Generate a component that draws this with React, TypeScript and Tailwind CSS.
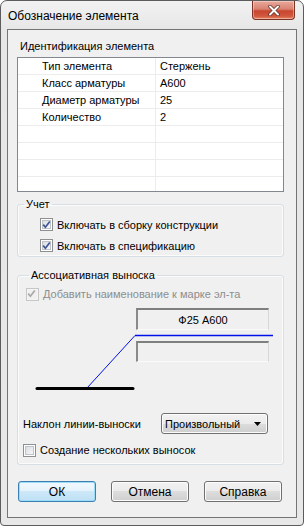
const rows: [string, string][] = [
  ['Тип элемента', 'Стержень'],
  ['Класс арматуры', 'A600'],
  ['Диаметр арматуры', '25'],
  ['Количество', '2'],
  ['', ''],
  ['', ''],
  ['', ''],
  ['', ''],
]

// Win7 style checkbox
function CheckBox({ checked, disabled }: { checked?: boolean; disabled?: boolean }) {
  return (
    <span
      className={`flex h-[13px] w-[13px] shrink-0 items-center justify-center border ${
        disabled ? 'border-[#c6c6c6] bg-[#f4f4f4]' : 'border-[#8e8f8f] bg-white'
      }`}
    >
      <span
        className={`relative h-[9px] w-[9px] ${
          disabled
            ? 'bg-[#f0f0f0]'
            : 'border border-[#bfc3c9] bg-[linear-gradient(135deg,#d9dde3,#f7f7f7)]'
        }`}
      >
        {checked && (
          <svg viewBox="0 0 11 11" className="absolute left-[-2px] top-[-2px] h-[11px] w-[11px]">
            <path
              d="M2.2 5.6 L4.4 8.2 L8.8 2.4"
              fill="none"
              stroke={disabled ? '#a9a9a9' : '#3f5595'}
              strokeWidth="1.7"
            />
          </svg>
        )}
      </span>
    </span>
  )
}

function Sunken({ children, h }: { children?: React.ReactNode; h: string }) {
  return (
    <div
      className={`flex w-[133px] items-center justify-center border-t-2 border-l-2 border-r border-b border-t-[#7f7f7f] border-l-[#8a8a8a] border-r-[#d6d6d6] border-b-[#fafafa] bg-[#f0f0f0] ${h}`}
    >
      {children}
    </div>
  )
}

function WinButton({ label, primary }: { label: string; primary?: boolean }) {
  return (
    <button
      className={`h-[21px] w-[78px] rounded-[3px] border text-[12px] leading-none text-black ${
        primary
          ? 'border-[#3c7fb1] bg-[linear-gradient(#f1f8fd_0%,#e4f2fb_50%,#cde8f8_50%,#bfe0f5_100%)] shadow-[inset_0_0_0_1px_#9ddcf8]'
          : 'border-[#707070] bg-[linear-gradient(#f2f2f2_0%,#ebebeb_50%,#dddddd_50%,#cfcfcf_100%)] shadow-[inset_0_0_0_1px_#fcfcfc]'
      }`}
    >
      {label}
    </button>
  )
}

export default function App() {
  return (
    <div className="h-[526px] w-[304px] bg-white font-['Liberation_Sans',Arial,sans-serif] text-[11px] leading-[14px] text-black">
      <div className="flex h-[526px] w-[304px] flex-col rounded-t-[7px] rounded-b-[4px] border border-[#5c5c5c] bg-[linear-gradient(#f2f2f2,#e6e6e6_30px,#e8e8e8)]">
        {/* ── Title bar ── */}
        <div className="flex h-[28px] shrink-0 items-start justify-between">
          <span className="pl-[7px] pt-[8px] text-[12px] leading-[14px]">Обозначение элемента</span>
          <button className="mr-[8px] flex h-[19px] w-[43px] items-center justify-center rounded-b-[4px] border border-t-0 border-[#7d3426] bg-[linear-gradient(#e9a99c_0%,#d98270_45%,#c8462f_55%,#d2593f_85%,#e68a6a_100%)] shadow-[inset_0_0_0_1px_rgba(255,255,255,0.35)]">
            <svg viewBox="0 0 12 11" className="h-[11px] w-[12px]">
              <path d="M2 1.5 L10 9.5 M10 1.5 L2 9.5" stroke="#5a2a20" strokeWidth="3.4" strokeLinecap="round" />
              <path d="M2 1.5 L10 9.5 M10 1.5 L2 9.5" stroke="#ffffff" strokeWidth="2" strokeLinecap="round" />
            </svg>
          </button>
        </div>

        {/* ── Client area ── */}
        <div className="mx-[6px] mb-[7px] flex flex-1 flex-col border border-[#747474] bg-[#f0f0f0] pl-[9px] pr-[12px]">
          <div className="pl-[3px] pt-[9px]">Идентификация элемента</div>

          {/* list */}
          <div className="mt-[4px] h-[135px] shrink-0 overflow-hidden border border-[#828790] bg-white">
            {rows.map(([k, v], i) => (
              <div key={i} className="grid h-[17px] grid-cols-[138px_1fr] border-b border-[#ececec]">
                <div className="flex items-center border-r border-[#ececec] pl-[24px]">{k}</div>
                <div className="flex items-center pl-[4px]">{v}</div>
              </div>
            ))}
          </div>

          {/* Учет */}
          <fieldset className="mt-[5px] rounded-[3px] border border-[#d5dfe5] px-0 pb-[2px] shadow-[inset_0_0_0_1px_#fbfbfb]">
            <legend className="ml-[6px] px-[2px] leading-[14px]">Учет</legend>
            <div className="flex flex-col gap-[4px] pl-[22px] pt-[5px]">
              <label className="flex h-[17px] items-center gap-[4px]">
                <CheckBox checked />
                <span>Включать в сборку конструкции</span>
              </label>
              <label className="flex h-[17px] items-center gap-[4px]">
                <CheckBox checked />
                <span>Включать в спецификацию</span>
              </label>
            </div>
          </fieldset>

          {/* Ассоциативная выноска */}
          <fieldset className="mt-[11px] rounded-[3px] border border-[#d5dfe5] pb-[6px] pl-[5px] shadow-[inset_0_0_0_1px_#fbfbfb]">
            <legend className="ml-[6px] px-[2px] leading-[14px]">Ассоциативная выноска</legend>
            <label className="ml-[3px] mt-[4px] flex h-[16px] items-center gap-[4px] text-[#8d8d8d]">
              <CheckBox checked disabled />
              <span>Добавить наименование к марке эл-та</span>
            </label>

            {/* leader preview */}
            <div className="relative mt-[2px] flex h-[92px] flex-col gap-[11px] pl-[113px] pt-[4px]">
              <svg viewBox="0 0 262 92" className="pointer-events-none absolute left-0 top-0 h-[92px] w-[262px]">
                <line x1="112" y1="31.5" x2="250" y2="31.5" stroke="#0010e8" strokeWidth="1.5" />
                <line x1="112" y1="31.5" x2="64" y2="84" stroke="#0010e8" strokeWidth="1" />
                <line x1="14" y1="84.5" x2="110" y2="84.5" stroke="#000" strokeWidth="3" strokeLinecap="round" />
              </svg>
              <Sunken h="h-[22px]">Ф25 A600</Sunken>
              <Sunken h="h-[21px]" />
            </div>

            <div className="mt-[17px] flex h-[21px] items-center">
              <span className="w-[138px]">Наклон линии-выноски</span>
              <div className="flex h-[21px] w-[107px] items-center justify-between rounded-[3px] border border-[#707070] bg-[linear-gradient(#f2f2f2_0%,#ebebeb_50%,#dddddd_50%,#cfcfcf_100%)] pl-[3px] pr-[6px] shadow-[inset_0_0_0_1px_#fcfcfc]">
                <span>Произвольный</span>
                <svg viewBox="0 0 7 4" className="h-[4px] w-[7px]">
                  <path d="M0 0 H7 L3.5 4 Z" fill="#000" />
                </svg>
              </div>
            </div>

            <label className="mt-[8px] flex h-[16px] items-center gap-[4px]">
              <CheckBox />
              <span>Создание нескольких выносок</span>
            </label>
          </fieldset>

          {/* buttons */}
          <div className="ml-[1px] mt-[16px] flex gap-[15px]">
            <WinButton label="ОК" primary />
            <WinButton label="Отмена" />
            <WinButton label="Справка" />
          </div>
        </div>
      </div>
    </div>
  )
}
